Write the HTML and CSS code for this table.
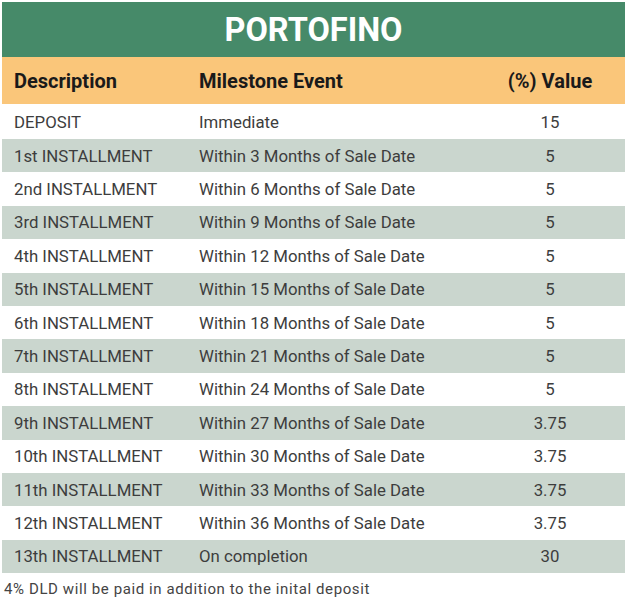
FILE: index.html
```html
<!DOCTYPE html>
<html>
<head>
<meta charset="utf-8">
<link rel="stylesheet" href="styles.css">
</head>
<body>
<div class="wrap">
  <div class="title">PORTOFINO</div>
  <table class="plan">
    <thead>
      <tr><th class="c1">Description</th><th class="c2">Milestone Event</th><th class="c3">(%) Value</th></tr>
    </thead>
    <tbody>
      <tr class="first"><td class="c1">DEPOSIT</td><td class="c2">Immediate</td><td class="c3">15</td></tr>
      <tr><td class="c1">1st INSTALLMENT</td><td class="c2">Within 3 Months of Sale Date</td><td class="c3">5</td></tr>
      <tr><td class="c1">2nd INSTALLMENT</td><td class="c2">Within 6 Months of Sale Date</td><td class="c3">5</td></tr>
      <tr><td class="c1">3rd INSTALLMENT</td><td class="c2">Within 9 Months of Sale Date</td><td class="c3">5</td></tr>
      <tr><td class="c1">4th INSTALLMENT</td><td class="c2">Within 12 Months of Sale Date</td><td class="c3">5</td></tr>
      <tr><td class="c1">5th INSTALLMENT</td><td class="c2">Within 15 Months of Sale Date</td><td class="c3">5</td></tr>
      <tr><td class="c1">6th INSTALLMENT</td><td class="c2">Within 18 Months of Sale Date</td><td class="c3">5</td></tr>
      <tr><td class="c1">7th INSTALLMENT</td><td class="c2">Within 21 Months of Sale Date</td><td class="c3">5</td></tr>
      <tr><td class="c1">8th INSTALLMENT</td><td class="c2">Within 24 Months of Sale Date</td><td class="c3">5</td></tr>
      <tr><td class="c1">9th INSTALLMENT</td><td class="c2">Within 27 Months of Sale Date</td><td class="c3">3.75</td></tr>
      <tr><td class="c1">10th INSTALLMENT</td><td class="c2">Within 30 Months of Sale Date</td><td class="c3">3.75</td></tr>
      <tr><td class="c1">11th INSTALLMENT</td><td class="c2">Within 33 Months of Sale Date</td><td class="c3">3.75</td></tr>
      <tr><td class="c1">12th INSTALLMENT</td><td class="c2">Within 36 Months of Sale Date</td><td class="c3">3.75</td></tr>
      <tr><td class="c1">13th INSTALLMENT</td><td class="c2">On completion</td><td class="c3">30</td></tr>
    </tbody>
  </table>
  <p class="note">4% DLD will be paid in addition to the inital deposit</p>
</div>
</body>
</html>
```
FILE: styles.css
```css
html, body {
  margin: 0;
  padding: 0;
  background: #ffffff;
}
.wrap {
  padding: 2px 5px 0 2px;
  font-family: Roboto, "Liberation Sans", sans-serif;
}
.title {
  background: #468a69;
  color: #ffffff;
  font-weight: 700;
  font-size: 32.5px;
  height: 55px;
  line-height: 57px;
  text-align: center;
}
.plan {
  width: 100%;
  border-collapse: collapse;
  table-layout: fixed;
}
.plan th {
  background: #fac67a;
  color: #1a1a1a;
  font-weight: 700;
  font-size: 20px;
  height: 47px;
  padding: 0;
  text-align: left;
}
.plan td {
  height: 33.4px;
  padding: 0;
  font-size: 16.8px;
  color: #3d3d3d;
  font-weight: 400;
}
.plan tr.first td {
  height: 35px;
}
.plan tbody tr:nth-child(even) td {
  background: #cad6ce;
}
.c1 {
  width: 185px;
  padding-left: 12px !important;
}
.c2 {
  width: 276px;
}
.c3 {
  text-align: center !important;
}
.note {
  margin: 7px 0 0 2px;
  font-size: 15px;
  letter-spacing: 0.6px;
  color: #444444;
}
```
